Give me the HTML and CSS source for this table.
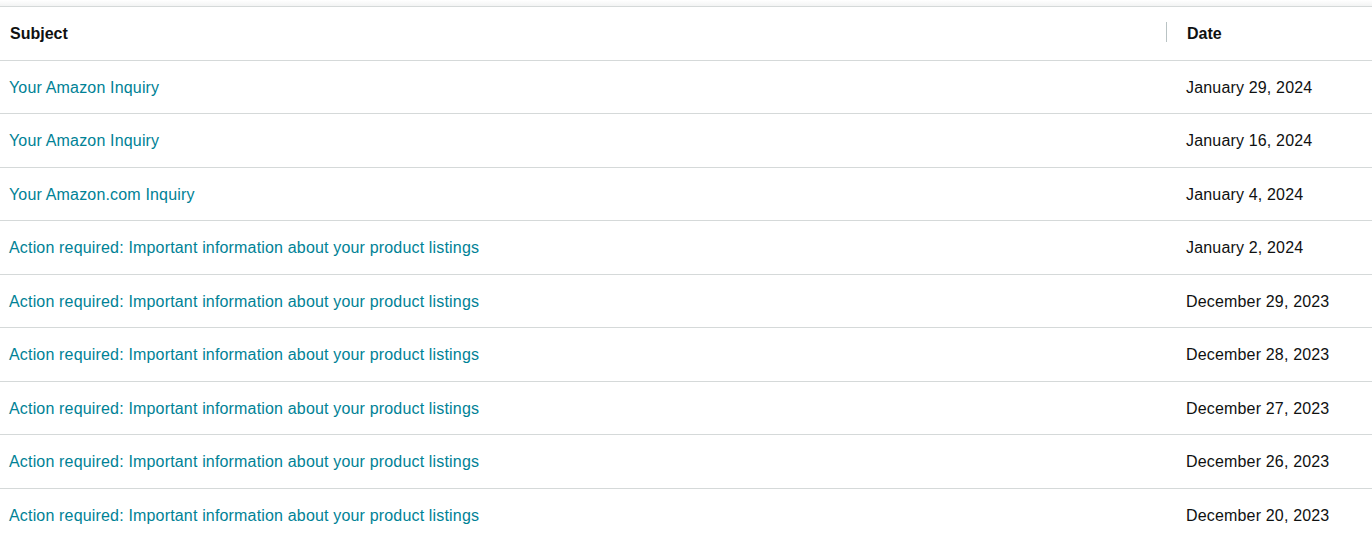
FILE: index.html
```html
<!DOCTYPE html>
<html>
<head>
<meta charset="utf-8">
<link rel="stylesheet" href="styles.css">
</head>
<body>
<div class="shade"></div>
<table class="msgs">
  <thead>
    <tr>
      <th class="subj">Subject</th>
      <th class="date"><span class="sep"></span>Date</th>
    </tr>
  </thead>
  <tbody>
    <tr><td class="subj"><a href="#">Your Amazon Inquiry</a></td><td class="date">January 29, 2024</td></tr>
    <tr><td class="subj"><a href="#">Your Amazon Inquiry</a></td><td class="date">January 16, 2024</td></tr>
    <tr><td class="subj"><a href="#">Your Amazon.com Inquiry</a></td><td class="date">January 4, 2024</td></tr>
    <tr><td class="subj"><a href="#">Action required: Important information about your product listings</a></td><td class="date">January 2, 2024</td></tr>
    <tr><td class="subj"><a href="#">Action required: Important information about your product listings</a></td><td class="date">December 29, 2023</td></tr>
    <tr><td class="subj"><a href="#">Action required: Important information about your product listings</a></td><td class="date">December 28, 2023</td></tr>
    <tr><td class="subj"><a href="#">Action required: Important information about your product listings</a></td><td class="date">December 27, 2023</td></tr>
    <tr><td class="subj"><a href="#">Action required: Important information about your product listings</a></td><td class="date">December 26, 2023</td></tr>
    <tr><td class="subj"><a href="#">Action required: Important information about your product listings</a></td><td class="date">December 20, 2023</td></tr>
  </tbody>
</table>
</body>
</html>
```
FILE: styles.css
```css
html, body {
  margin: 0;
  padding: 0;
  background: #fff;
  font-family: "Liberation Sans", Arial, sans-serif;
  font-size: 16px;
  color: #0f1111;
  overflow: hidden;
}
.shade {
  height: 6px;
  background: linear-gradient(to bottom, #ffffff, #f3f4f4);
}
.msgs {
  width: 1372px;
  border-collapse: collapse;
  table-layout: fixed;
}
.msgs th, .msgs td {
  padding: 0;
  text-align: left;
  vertical-align: middle;
  white-space: nowrap;
}
.msgs thead tr {
  border-top: 1px solid #d5d9d9;
  border-bottom: 1px solid #d5d9d9;
}
.msgs th {
  height: 53px;
  font-weight: bold;
  font-size: 16px;
  color: #0f1111;
}
.msgs th.subj { padding-left: 10px; }
.msgs th.date {
  width: 185px;
  padding-left: 21px;
  position: relative;
}
.sep {
  position: absolute;
  left: 0;
  top: 15px;
  width: 1px;
  height: 20px;
  background: #b9c3c4;
}
.msgs tbody tr {
  border-bottom: 1px solid #d5d9d9;
}
.msgs td {
  height: 51px;
  padding-top: 1px;
  letter-spacing: 0.17px;
}
.msgs tbody tr:nth-child(even) td {
  height: 53px;
  padding-top: 0;
}
.msgs td.subj { padding-left: 9px; }
.msgs td.date { padding-left: 20px; }
.msgs a {
  color: #008296;
  text-decoration: none;
}
```
